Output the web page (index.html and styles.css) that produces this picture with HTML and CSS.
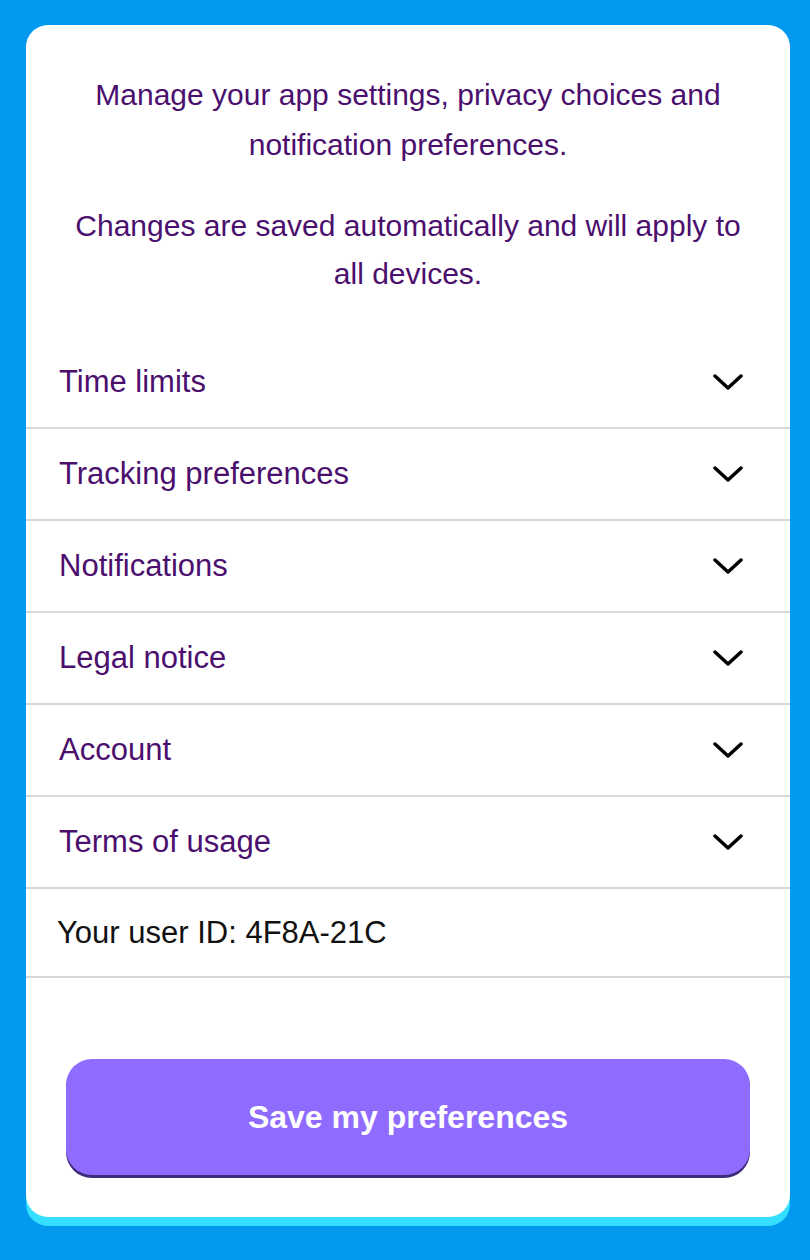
FILE: index.html
```html
<!DOCTYPE html>
<html lang="en">
<head>
<meta charset="utf-8">
<title>Settings</title>
<link rel="stylesheet" href="styles.css">
</head>
<body>
<main class="card">
  <header class="intro">
    <p class="intro-title">Manage your app settings, privacy choices and<br>notification preferences.</p>
    <p class="intro-text">Changes are saved automatically and will apply to<br>all devices.</p>
  </header>
  <ul class="menu">
    <li class="menu-row"><span class="menu-label">Time limits</span><svg class="chev" viewBox="0 0 30 16"><polyline points="2,2 15,14 28,2"/></svg></li>
    <li class="menu-row"><span class="menu-label">Tracking preferences</span><svg class="chev" viewBox="0 0 30 16"><polyline points="2,2 15,14 28,2"/></svg></li>
    <li class="menu-row"><span class="menu-label">Notifications</span><svg class="chev" viewBox="0 0 30 16"><polyline points="2,2 15,14 28,2"/></svg></li>
    <li class="menu-row"><span class="menu-label">Legal notice</span><svg class="chev" viewBox="0 0 30 16"><polyline points="2,2 15,14 28,2"/></svg></li>
    <li class="menu-row"><span class="menu-label">Account</span><svg class="chev" viewBox="0 0 30 16"><polyline points="2,2 15,14 28,2"/></svg></li>
    <li class="menu-row"><span class="menu-label">Terms of usage</span><svg class="chev" viewBox="0 0 30 16"><polyline points="2,2 15,14 28,2"/></svg></li>
    <li class="menu-row menu-info"><span class="info-label">Your user ID: 4F8A-21C</span></li>
  </ul>
  <button class="save">Save my preferences</button>
</main>
</body>
</html>
```
FILE: styles.css
```css
* { box-sizing: border-box; }
html, body { margin: 0; }
body {
  background: #0299ee;
  padding: 25px 20px 0 26px;
  height: 1260px;
  font-family: "Liberation Sans", Arial, sans-serif;
}
.card {
  width: 764px;
  background: #fff;
  border-radius: 22px;
  box-shadow: 0 9px 0 #35dfff;
  padding: 45px 0 42px;
  display: flex;
  flex-direction: column;
}
.intro {
  padding: 0 30px;
  text-align: center;
  color: #4b0f6e;
  font-size: 30px;
}
.intro p { margin: 0; }
.intro-title { line-height: 50px; }
.intro-text { line-height: 48px; margin-top: 32px !important; }
.menu {
  list-style: none;
  margin: 39px 0 0;
  padding: 0;
}
.menu-row {
  height: 92px;
  border-bottom: 2px solid #d6d6dc;
  display: flex;
  align-items: center;
  justify-content: space-between;
  padding: 0 47px 0 33px;
}
.menu-label {
  font-size: 31px;
  color: #4b0f6e;
}
.chev {
  width: 30px;
  height: 16px;
  fill: none;
  stroke: #000;
  stroke-width: 3.5;
  stroke-linecap: round;
  stroke-linejoin: round;
}
.menu-info { height: 89px; padding-left: 31px; }
.info-label {
  font-size: 31px;
  color: #111;
}
.save {
  margin: 81px 40px 0;
  height: 116px;
  border: 0;
  border-radius: 26px;
  background: #8f6cff;
  box-shadow: 0 3px 0 #3d2b7c;
  color: #fff;
  font-family: inherit;
  font-size: 32px;
  font-weight: 700;
}
```
